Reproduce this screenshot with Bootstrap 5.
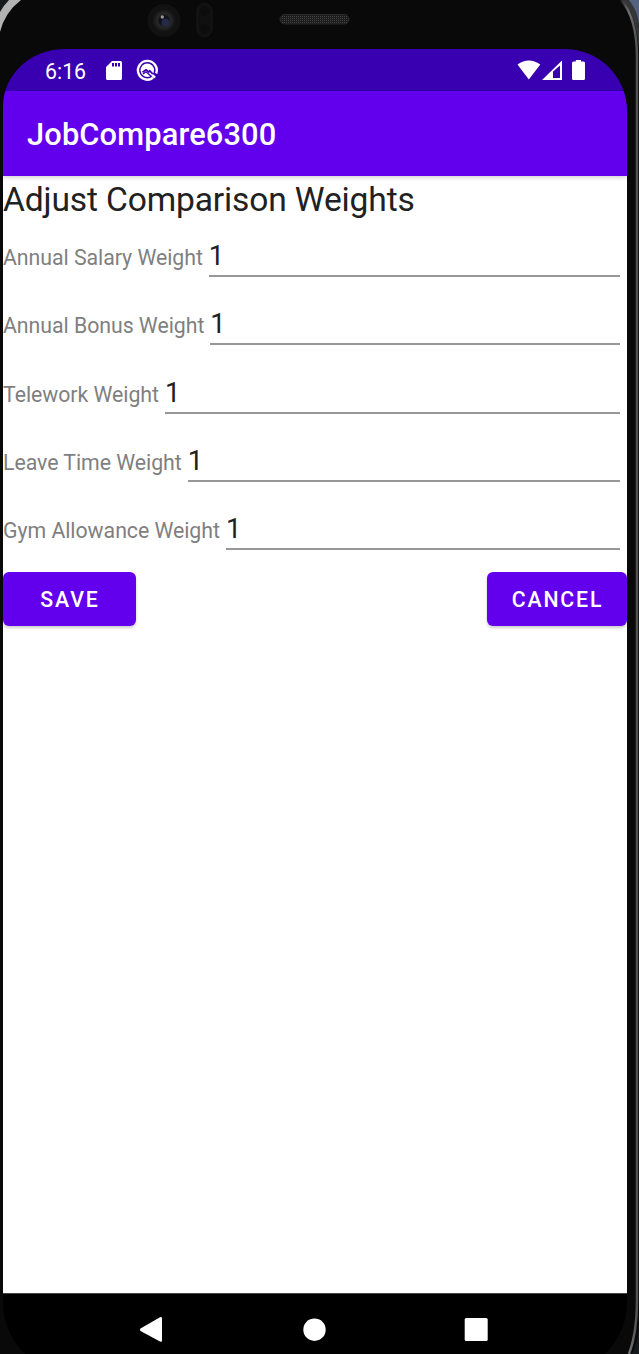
<!DOCTYPE html>
<html lang="en">
<head>
<meta charset="utf-8">
<meta name="viewport" content="width=device-width, initial-scale=1">
<title>JobCompare6300</title>
<link href="https://cdn.jsdelivr.net/npm/bootstrap@5.3.0/dist/css/bootstrap.min.css" rel="stylesheet">
<style>
body{margin:0;background:#0a0a0b;font-family:Roboto,"Liberation Sans",sans-serif;color:#212121}
.phone{width:639px;height:1354px;padding:0 12px 0 3px}
.shell{left:0;top:0;z-index:0}
.bezel{height:49px}
.screen{z-index:1;border-radius:62px 62px 72px 72px / 57px 62px 72px 72px;overflow:hidden;height:1325px;flex:none}
.status{height:42px;background:#3900b2;padding:0 42px}
.clock{font-size:21.3px;line-height:42px;letter-spacing:0;padding-top:2px;width:60px}
.appbar{height:84.5px;background:#6200ee;padding:0 24px 0 24px;box-shadow:0 1px 5px rgba(0,0,0,.22);z-index:1}
.apptitle{font-size:30.8px;font-weight:500;line-height:36px;letter-spacing:.15px;padding-top:3px}
.heading{font-size:33.6px;font-weight:400;line-height:40px;letter-spacing:-.15px;height:50.2px;padding-top:4px;margin:0;white-space:nowrap}
.field{height:68.45px;padding-right:7px}
.field label{font-size:21.3px;line-height:26px;color:#7f7f7f;letter-spacing:-.04px;white-space:nowrap;padding-top:19px;margin-right:6px}
.field input{font-family:inherit;font-size:27.4px;line-height:32px;height:38px;margin-top:13px;min-width:0;color:#212121;border:0;border-bottom:2px solid #979797;border-radius:0;padding:1px 0 3px 0;background:transparent;outline:0;flex:1}
.actions{margin-top:4px}
.btn-fill{background:#6200ee;color:#fff;height:54px;border-radius:6px;border:0;padding:3px 0 0 1px;font-size:21.3px;font-weight:500;letter-spacing:1.85px;box-shadow:0 2px 3px rgba(0,0,0,.2)}
.btn-fill:hover{background:#6200ee;color:#fff}
.save{width:133px}.cancel{width:140px}
.content{height:1117.5px;background:#fff}
.sysnav{height:81px;background:#000;border-top:1px solid #444}
</style>
</head>
<body>
<div class="phone position-relative overflow-hidden d-flex flex-column">
<svg class="shell position-absolute" width="639" height="1354" viewBox="0 0 639 1354" aria-hidden="true">
<defs>
<linearGradient id="rim" x1="0" x2="1"><stop offset="0" stop-color="#252525"/><stop offset=".5" stop-color="#737373"/><stop offset="1" stop-color="#505050"/></linearGradient>
<radialGradient id="lens"><stop offset="0" stop-color="#08080d"/><stop offset=".45" stop-color="#11131c"/><stop offset=".6" stop-color="#292929"/><stop offset="1" stop-color="#151515"/></radialGradient>
<pattern id="mesh" width="2" height="2" patternUnits="userSpaceOnUse"><rect width="2" height="2" fill="#1b1b1b"/><rect width="1" height="1" fill="#464646"/></pattern>
</defs>
<rect width="639" height="1354" fill="#09090a"/>
<path d="M0 0H9L0 12Z" fill="#17181c"/>
<path d="M9 0H21Q5 12 0 32V12Q4 5 9 0Z" fill="#b2b2b2"/>
<path d="M626 0H639V25Q636 10 626 0Z" fill="#52627f"/>
<path d="M621 0H629Q639 12 639 28V50Q636 12 621 0Z" fill="#353637"/>
<path d="M621 0Q637 18 637 57V1300Q637 1333 629 1354" fill="none" stroke="url(#rim)" stroke-width="2.5"/>
<path d="M639 1325V1354H632Q638 1342 639 1325Z" fill="#17181c"/>
<circle cx="164" cy="20.500" r="16.500" fill="#121213"/><circle cx="164" cy="20.500" r="11" fill="url(#lens)"/><circle cx="165.500" cy="22.500" r="4" fill="#252a48"/><circle cx="162.300" cy="17" r="1.700" fill="#969696"/>
<rect x="197" y="3.500" width="15" height="33" rx="7.500" fill="#101011" stroke="#181818"/><circle cx="204.500" cy="11.500" r="5.500" fill="#0c0c0d" stroke="#131313"/><circle cx="204.500" cy="28.500" r="5.500" fill="#0c0c0d" stroke="#131313"/>
<rect x="280" y="14.500" width="69" height="9.500" rx="4.750" fill="url(#mesh)" stroke="#292929"/>
</svg>
<div class="bezel flex-shrink-0"></div>
<main class="screen position-relative">
<div class="status d-flex text-white">
<span class="clock">6:16</span>
<svg width="56" height="42" viewBox="105 49 56 42" aria-hidden="true"><path fill="#fff" fill-rule="evenodd" d="M112 61H120.500Q122 61 122 62.500V78.500Q122 80 120.500 80H107.500Q106 80 106 78.500V67ZM112 63V66.500H114V63ZM115 63V66.500H117V63ZM118 63V66.500H120V63Z"/><path d="M153 77.800A9.400 9.400 0 1 1 156.200 73.500" fill="none" stroke="#fff" stroke-width="2.400"/><circle cx="147.300" cy="70.200" r="6.700" fill="#fff"/><path d="M142.500 72.200L146 69.700L148.800 72L149.800 70.800L156 77.500" fill="none" stroke="#3900b2" stroke-width="1.700"/><path d="M143 74L146 71.800L151.500 76.500" fill="none" stroke="#3900b2" stroke-width="1.400"/><path d="M152 74.800L155 77.600" stroke="#fff" stroke-width="2.500"/></svg>
<svg class="ms-auto" width="68" height="42" viewBox="517 49 68 42" aria-hidden="true"><path fill="#fff" d="M517.500 64.500Q528.800 56.300 540.300 64.500L528.800 79.500Z"/><path fill="#fff" fill-rule="evenodd" d="M542 80L562 60.500V80ZM553 71.500V78H560V65.500Z"/><path fill="#fff" d="M575.800 60H581V61.500H583.500Q585 61.500 585 63V78.500Q585 80 583.500 80H573.500Q572 80 572 78.500V63Q572 61.500 573.500 61.500H575.800Z"/></svg>
</div>
<header class="appbar position-relative d-flex align-items-center text-white"><span class="apptitle">JobCompare6300</span></header>
<section class="content">
<h1 class="heading">Adjust Comparison Weights</h1>
<form>
<div class="field d-flex align-items-start"><label for="salary">Annual Salary Weight</label><input id="salary" value="1"></div>
<div class="field d-flex align-items-start"><label for="bonus">Annual Bonus Weight</label><input id="bonus" value="1"></div>
<div class="field d-flex align-items-start"><label for="telework">Telework Weight</label><input id="telework" value="1"></div>
<div class="field d-flex align-items-start"><label for="leave">Leave Time Weight</label><input id="leave" value="1"></div>
<div class="field d-flex align-items-start"><label for="gym">Gym Allowance Weight</label><input id="gym" value="1"></div>
<div class="actions d-flex justify-content-between"><button type="button" class="btn btn-fill save">SAVE</button><button type="button" class="btn btn-fill cancel">CANCEL</button></div>
</form>
</section>
<nav class="sysnav"><svg class="d-block" width="624" height="60" viewBox="3 1294 624 60" aria-hidden="true"><g fill="#fff"><path d="M140.500 1328.500L160 1317.200Q162 1316.500 162 1318.500V1340.500Q162 1342.500 160 1341.500L140.500 1331Q139.300 1329.700 140.500 1328.500Z"/><circle cx="314.500" cy="1329.700" r="11.200"/><rect x="464.700" y="1318" width="23" height="23" rx="1.500"/></g></svg></nav>
</main>
</div>
<script src="https://cdn.jsdelivr.net/npm/bootstrap@5.3.0/dist/js/bootstrap.bundle.min.js"></script>
</body>
</html>
